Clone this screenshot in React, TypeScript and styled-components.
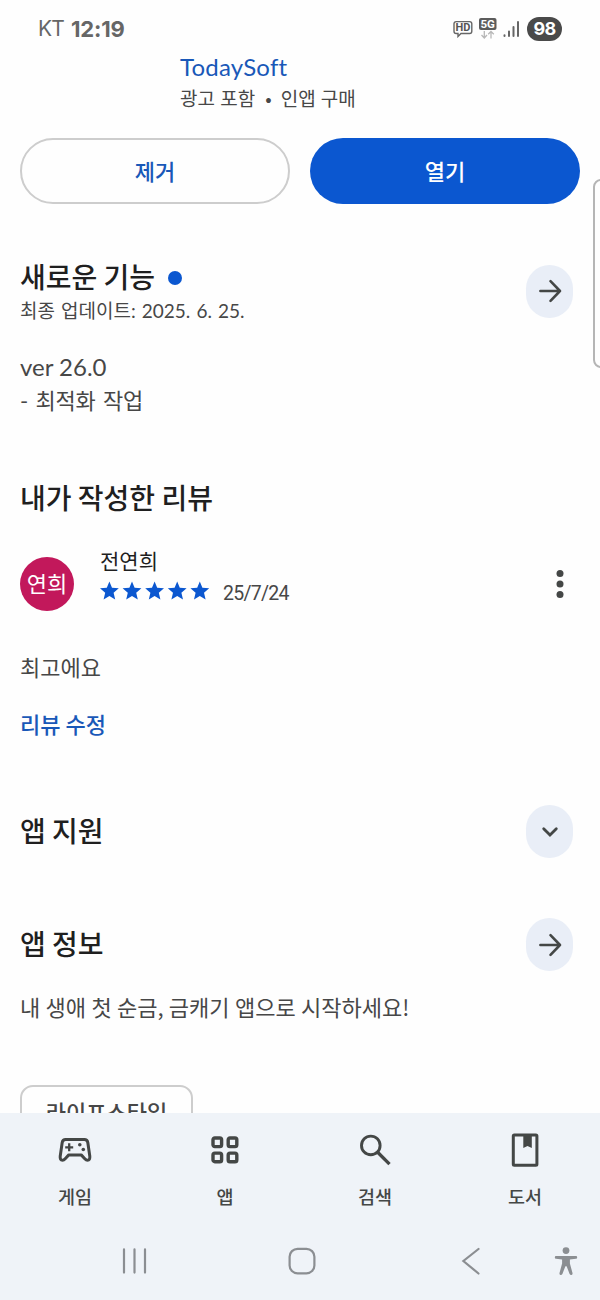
import React from "react";
import styled, { createGlobalStyle } from "styled-components";

const GlobalStyle = createGlobalStyle`
  * { box-sizing: border-box; }
  body { margin: 0; background: #fefefe; }
`;

const latin = '"Lato", "Noto Sans CJK KR", sans-serif';
const korean = '"Noto Sans CJK KR", sans-serif';

const Screen = styled.div`
  position: relative;
  width: 600px;
  height: 1300px;
  overflow: hidden;
  display: flex;
  flex-direction: column;
  background: #fefefe;
  color: #474747;
  font-family: ${korean};
`;

const StatusBar = styled.header`
  height: 52px;
  flex: none;
  padding: 6px 38px 0 38px;
  display: flex;
  align-items: center;
  justify-content: space-between;
  color: #666;
`;

const Clock = styled.div`
  display: flex;
  gap: 7px;
  font: 400 21px/30px "Inter", sans-serif;
  letter-spacing: -0.8px;
  b { font-weight: 700; font-size: 22px; letter-spacing: -0.2px; }
`;

const StatusIcons = styled.div`
  display: flex;
  align-items: center;
  gap: 6px;
`;

const Battery = styled.span`
  width: 35px;
  height: 24px;
  margin-left: 1px;
  border-radius: 12px;
  background: #4a4a4a;
  color: #fff;
  font: 700 18px/24px "Inter", sans-serif;
  letter-spacing: -0.6px;
  text-align: center;
`;

const Content = styled.main`
  height: 1061px;
  flex: none;
  overflow: hidden;
  padding: 0 20px;
`;

type TextProps = {
  $size: number;
  $height: number;
  $weight?: number;
  $color?: string;
  $spacing?: number;
  $word?: number;
  $latin?: boolean;
};

const Text = styled.div<TextProps>`
  height: ${(p) => p.$height}px;
  line-height: ${(p) => p.$height}px;
  font-size: ${(p) => p.$size}px;
  font-weight: ${(p) => p.$weight ?? 400};
  font-family: ${(p) => (p.$latin ? latin : korean)};
  color: ${(p) => p.$color ?? "#474747"};
  letter-spacing: ${(p) => p.$spacing ?? 0}px;
  word-spacing: ${(p) => p.$word ?? 0}px;
  white-space: pre;
`;

const Heading = styled.h2<{ $lift?: number }>`
  margin: 0 0 ${(p) => p.$lift ?? 0}px;
  height: 36px;
  font-size: 28px;
  line-height: 36px;
  font-weight: 500;
  color: #1f1f1f;
  white-space: pre;
`;

const Developer = styled.div`
  height: 86px;
  padding-left: 160px;
`;

const Bullet = styled.span`
  margin: 0 9px 0 10px;
`;

const Actions = styled.div`
  display: grid;
  grid-template-columns: 1fr 1fr;
  gap: 20px;
`;

const ActionButton = styled.button<{ $filled?: boolean }>`
  height: 66px;
  padding: 0 0 2px;
  border-radius: 33px;
  border: ${(p) => (p.$filled ? "0" : "2px solid #cdcdcd")};
  background: ${(p) => (p.$filled ? "#0b57d0" : "transparent")};
  color: ${(p) => (p.$filled ? "#fff" : "#1958b8")};
  font: 500 22px/30px ${korean};
`;

const SectionRow = styled.div<{ $top: number; $height: number }>`
  margin-top: ${(p) => p.$top}px;
  height: ${(p) => p.$height}px;
  padding-right: 7px;
  display: flex;
  align-items: center;
  justify-content: space-between;
`;

const UpdateSummary = styled.div`
  height: 66px;
`;

const HeadingLine = styled.div`
  display: flex;
  align-items: center;
`;

const NewDot = styled.i`
  width: 14px;
  height: 14px;
  margin: 3px 0 0 13px;
  border-radius: 50%;
  background: #0b57d0;
`;

const RoundButton = styled.button`
  width: 47px;
  height: 53px;
  padding: 0;
  border: 0;
  border-radius: 24px;
  background: #e9eef7;
  display: grid;
  place-items: center;
`;

const Block = styled.div<{ $top: number }>`
  margin-top: ${(p) => p.$top}px;
`;

const Review = styled.div`
  margin-top: 30px;
  height: 78px;
  display: flex;
  align-items: center;
`;

const Avatar = styled.div`
  width: 54px;
  height: 54px;
  margin-right: 26px;
  border-radius: 50%;
  background: #c2185b;
  color: #fff;
  font-size: 22px;
  line-height: 51px;
  text-align: center;
`;

const Reviewer = styled.div`
  flex: 1;
  height: 78px;
`;

const RatingRow = styled.div`
  display: flex;
  height: 32px;
  align-items: center;
`;

const ReviewDate = styled.span`
  margin: 6px 0 0 12px;
  font: 400 19.5px/24px "Roboto", sans-serif;
  letter-spacing: -0.75px;
`;

const MoreButton = styled.button`
  width: 20px;
  height: 32px;
  margin-right: 10px;
  padding: 0;
  border: 0;
  background: none;
`;

const Tag = styled.div`
  width: 173px;
  height: 54px;
  border: 2px solid #cdcdcd;
  border-radius: 13px;
  text-align: center;
  font-size: 22px;
  line-height: 48px;
  font-weight: 500;
`;

const BottomArea = styled.footer`
  flex: 1;
  background: #eff3f8;
`;

const Tabs = styled.nav`
  display: grid;
  grid-template-columns: repeat(4, 1fr);
  height: 108px;
  padding-top: 20px;
`;

const Tab = styled.div`
  display: flex;
  flex-direction: column;
  align-items: center;
  gap: 14px;
  font-size: 18.5px;
  line-height: 30px;
  font-weight: 500;
  color: #444746;
  svg { display: block; height: 34px; }
`;

const SystemNav = styled.div`
  display: flex;
  align-items: center;
  height: 80px;
  padding-left: 114px;
  svg { flex: none; display: block; }
`;

const EdgePanel = styled.aside`
  position: absolute;
  top: 179px;
  left: 593px;
  width: 20px;
  height: 189px;
  border: 2px solid #b5b5b5;
  border-radius: 8px;
  background: #fefefe;
`;

const ArrowIcon = () => (
  <svg width="24" height="24" viewBox="0 0 24 24" fill="none" stroke="#444746" strokeWidth="2.6" strokeLinecap="round" strokeLinejoin="round">
    <path d="M2.4 12H22M12.5 2.2L22 12L12.5 21.8" />
  </svg>
);

const ChevronIcon = () => (
  <svg width="20" height="20" viewBox="0 0 20 20" fill="none" stroke="#444746" strokeWidth="2.8" strokeLinecap="round">
    <path d="M3.7 6.8L10 13.1L16.3 6.8" />
  </svg>
);

const Stars = () => (
  <svg width="111" height="20" viewBox="0 0 111 20" fill="#0b57d0">
    {[0, 1, 2, 3, 4].map((i) => (
      <path
        key={i}
        transform={`translate(${i * 22.6 + 0.4} 0)`}
        d="M9 .4L11.6 6.8L18.4 7.3L13.2 11.8L14.8 18.6L9 15L3.2 18.6L4.8 11.8L-.4 7.3L6.4 6.8Z"
      />
    ))}
  </svg>
);

const HdIcon = () => (
  <svg width="20" height="18" viewBox="0 0 20 18" fill="none" stroke="#666" strokeWidth="1.4">
    <path d="M3.2 1.6H16.6Q18.8 1.6 18.8 3.8V11.3Q18.8 13.5 16.6 13.5H8L5 16.5V13.5H3.2Q1 13.5 1 11.3V3.8Q1 1.6 3.2 1.6Z" />
    <text x="10" y="11.4" textAnchor="middle" fill="#555" stroke="none" fontFamily="Roboto, sans-serif" fontWeight="700" fontSize="11">HD</text>
  </svg>
);

const FiveGIcon = () => (
  <svg width="18" height="22" viewBox="0 0 18 22">
    <rect x="0" y="0" width="17.5" height="12" rx="2" fill="#5c5c5c" />
    <text x="8.7" y="10" textAnchor="middle" fill="#fff" fontFamily="Roboto, sans-serif" fontWeight="700" fontSize="11.5">5G</text>
    <path d="M5.3 13V20M2.5 17L5.3 20L8 17M12 20.5V13.5M9.2 16.3L12 13.5L14.8 16.3" fill="none" stroke="#b8b8b8" strokeWidth="1.3" />
  </svg>
);

const SignalIcon = () => (
  <svg width="17" height="18" viewBox="0 0 17 18" stroke="#666" strokeWidth="2" strokeLinecap="round">
    <path d="M1.5 15.2V16M6 11.5V16M10.5 7V16M15 2V16" />
  </svg>
);

const GameIcon = () => (
  <svg width="34" height="32" viewBox="0 0 34 32" fill="none" stroke="#444746" strokeWidth="3" strokeLinejoin="round">
    <path d="M7.6 5.5H26.4Q29.2 5.5 29.8 8.5L31.8 22.2Q32.2 26.3 29.5 26.3Q28.2 26.3 26.8 24.7L23.2 20.9H10.8L7.2 24.7Q5.8 26.3 4.5 26.3Q1.8 26.3 2.2 22.2L4.2 8.5Q4.8 5.5 7.6 5.5Z" />
    <path d="M11.2 9.3V17.3M7.2 13.3H15.2" strokeWidth="2.3" />
    <circle cx="21.8" cy="10.8" r="1.8" fill="#444746" stroke="none" />
    <circle cx="25.3" cy="15.5" r="1.8" fill="#444746" stroke="none" />
  </svg>
);

const AppsIcon = () => (
  <svg width="32" height="32" viewBox="0 0 32 32" fill="none" stroke="#444746" strokeWidth="3.4">
    <rect x="4" y="4" width="8.6" height="8.6" rx="1.8" />
    <rect x="19.2" y="4" width="8.6" height="8.6" rx="1.8" />
    <rect x="4" y="19.1" width="8.6" height="8.6" rx="1.8" />
    <rect x="19.2" y="19.1" width="8.6" height="8.6" rx="1.8" />
  </svg>
);

const SearchIcon = () => (
  <svg width="32" height="32" viewBox="0 0 32 32" fill="none" stroke="#444746" strokeWidth="2.9">
    <circle cx="11.8" cy="11.4" r="9.3" />
    <path d="M18.4 18L30.5 30.2" strokeWidth="3.3" />
  </svg>
);

const BookIcon = () => (
  <svg width="28" height="34" viewBox="0 0 28 34">
    <rect x="2.3" y="1.9" width="23.6" height="30.4" rx="1" fill="none" stroke="#444746" strokeWidth="3" />
    <path d="M12.3 2H20.8V15L16.5 13L12.3 15Z" fill="#444746" />
  </svg>
);

const RecentsIcon = () => (
  <svg width="40" height="32" viewBox="0 0 40 32" stroke="#8b8e92" strokeWidth="2.2" strokeLinecap="round">
    <path d="M10 4.4V27.6M20.5 4.4V27.6M31 4.4V27.6" />
  </svg>
);

const HomeIcon = () => (
  <svg width="30" height="30" viewBox="0 0 30 30" fill="none" stroke="#8b8e92" strokeWidth="2.2">
    <rect x="2.6" y="2.8" width="24.8" height="24.6" rx="8" />
  </svg>
);

const BackIcon = () => (
  <svg width="20" height="30" viewBox="0 0 20 30" fill="none" stroke="#8b8e92" strokeWidth="2.2" strokeLinecap="round">
    <path d="M17.5 3L2.4 15L17.5 27.5" />
  </svg>
);

const AccessibilityIcon = () => (
  <svg width="24" height="30" viewBox="0 0 24 30" fill="#8b8e92">
    <circle cx="12" cy="4.6" r="3.4" />
    <path d="M2 10.1H22Q23.2 10.1 23.2 11.4Q23.2 12.6 22 12.8L15.9 13.6V17.5L18.5 27Q18.8 28.6 17.5 29Q16.2 29.2 15.6 27.9L12.6 20.2H11.4L8.4 27.9Q7.8 29.2 6.5 29Q5.2 28.6 5.5 27L8.1 17.5V13.6L2 12.8Q.8 12.6 .8 11.4Q.8 10.1 2 10.1Z" />
  </svg>
);

const NavSlot = styled.div<{ $width: number }>`
  width: ${(p) => p.$width}px;
`;

export default function App() {
  return (
    <Screen>
      <GlobalStyle />
      <StatusBar>
        <Clock>KT<b>12:19</b></Clock>
        <StatusIcons>
          <HdIcon />
          <FiveGIcon />
          <SignalIcon />
          <Battery>98</Battery>
        </StatusIcons>
      </StatusBar>

      <Content>
        <Developer>
          <Text $size={24} $height={30} $latin $spacing={0.2} $color="#1958b8">TodaySoft</Text>
          <Text $size={19} $height={32} $word={1}>광고 포함<Bullet>•</Bullet>인앱 구매</Text>
        </Developer>

        <Actions>
          <ActionButton>제거</ActionButton>
          <ActionButton $filled>열기</ActionButton>
        </Actions>

        <SectionRow $top={54} $height={66}>
          <UpdateSummary>
            <HeadingLine>
              <Heading>새로운 기능</Heading>
              <NewDot />
            </HeadingLine>
            <Text $size={19} $height={34} $word={1.2} $latin>최종 업데이트: 2025. 6. 25.</Text>
          </UpdateSummary>
          <RoundButton><ArrowIcon /></RoundButton>
        </SectionRow>

        <Block $top={26}>
          <Text $size={24} $height={34} $latin>ver 26.0</Text>
          <Text $size={22} $height={34} $word={2} $spacing={-0.2} $latin>- 최적화 작업</Text>
        </Block>

        <Block $top={61}>
          <Heading>내가 작성한 리뷰</Heading>
        </Block>

        <Review>
          <Avatar>연희</Avatar>
          <Reviewer>
            <Text $size={21} $height={30} $color="#1f1f1f">전연희</Text>
            <RatingRow>
              <Stars />
              <ReviewDate>25/7/24</ReviewDate>
            </RatingRow>
          </Reviewer>
          <MoreButton>
            <svg width="20" height="32" viewBox="0 0 20 32" fill="#444746">
              <circle cx="10" cy="5.5" r="3.5" />
              <circle cx="10" cy="16" r="3.5" />
              <circle cx="10" cy="26.5" r="3.5" />
            </svg>
          </MoreButton>
        </Review>

        <Block $top={27}>
          <Text $size={22} $height={32}>최고에요</Text>
        </Block>
        <Block $top={25}>
          <Text $size={22} $height={32} $weight={500} $color="#1958b8">리뷰 수정</Text>
        </Block>

        <SectionRow $top={66} $height={53}>
          <Heading $lift={3}>앱 지원</Heading>
          <RoundButton><ChevronIcon /></RoundButton>
        </SectionRow>
        <SectionRow $top={60} $height={53}>
          <Heading $lift={3}>앱 정보</Heading>
          <RoundButton><ArrowIcon /></RoundButton>
        </SectionRow>

        <Block $top={19}>
          <Text $size={22} $height={32} $word={0.4}>내 생애 첫 순금, 금캐기 앱으로 시작하세요!</Text>
        </Block>
        <Block $top={63}>
          <Tag>라이프스타일</Tag>
        </Block>
      </Content>

      <BottomArea>
        <Tabs>
          <Tab><GameIcon />게임</Tab>
          <Tab><AppsIcon />앱</Tab>
          <Tab><SearchIcon />검색</Tab>
          <Tab><BookIcon />도서</Tab>
        </Tabs>
        <SystemNav>
          <NavSlot $width={173}><RecentsIcon /></NavSlot>
          <NavSlot $width={174}><HomeIcon /></NavSlot>
          <NavSlot $width={93}><BackIcon /></NavSlot>
          <AccessibilityIcon />
        </SystemNav>
      </BottomArea>
      <EdgePanel />
    </Screen>
  );
}
